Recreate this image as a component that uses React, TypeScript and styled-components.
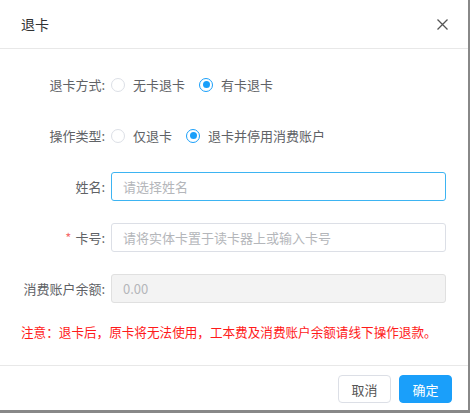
import React from 'react'
import styled, { createGlobalStyle } from 'styled-components'

const GlobalStyle = createGlobalStyle`
  html, body {
    margin: 0;
    padding: 0;
    background: #888888;
    width: 470px;
    height: 413px;
    overflow: hidden;
  }
  * {
    box-sizing: border-box;
  }
`

const Dialog = styled.div`
  width: 468px;
  height: 410px;
  background: #ffffff;
  display: flex;
  flex-direction: column;
  font-family: 'Noto Sans CJK SC', 'Noto Sans', sans-serif;
  font-size: 13px;
  color: #606266;
`

const Header = styled.div`
  height: 49px;
  flex-shrink: 0;
  display: flex;
  align-items: center;
  justify-content: space-between;
  padding: 0 19px 0 21px;
  border-bottom: 1px solid #e8e8e8;
`

const Title = styled.span`
  font-size: 14px;
  color: #303133;
`

const CloseButton = styled.button`
  width: 14px;
  height: 14px;
  padding: 0;
  border: none;
  background: none;
  display: flex;
  align-items: center;
  justify-content: center;
  cursor: pointer;
`

const Body = styled.div`
  flex: 1;
  display: flex;
  flex-direction: column;
  gap: 22px;
  padding: 21px 22px 0 20px;
`

const FormItem = styled.div`
  display: flex;
  align-items: center;
  height: 29px;
  flex-shrink: 0;
`

const Label = styled.label`
  width: 85px;
  flex-shrink: 0;
  text-align: right;
  margin-right: 6px;
  white-space: nowrap;
  color: #606266;
`

const Required = styled.span`
  color: #f56c6c;
  margin-right: 4px;
`

const RadioGroup = styled.div`
  display: flex;
  align-items: center;
`

const RadioItem = styled.label`
  display: flex;
  align-items: center;
  margin-right: 14px;
  cursor: pointer;
  color: #606266;
`

const RadioCircle = styled.span<{ $checked?: boolean }>`
  width: 14px;
  height: 14px;
  border-radius: 50%;
  border: 1px solid ${({ $checked }) => ($checked ? '#1a9ffa' : '#dcdfe6')};
  display: flex;
  align-items: center;
  justify-content: center;
  margin-right: 8px;
  &::after {
    content: '';
    width: 7px;
    height: 7px;
    border-radius: 50%;
    background: #1a9ffa;
    display: ${({ $checked }) => ($checked ? 'block' : 'none')};
  }
`

const Input = styled.input<{ $focused?: boolean }>`
  flex: 1;
  height: 29px;
  border: 1px solid ${({ $focused }) => ($focused ? '#3db4f2' : '#dcdfe6')};
  border-radius: 3px;
  padding: 0 11px;
  font-family: inherit;
  font-size: 13px;
  color: #606266;
  background: #ffffff;
  outline: none;
  &::placeholder {
    color: #b4b6ba;
  }
  &:disabled {
    background: #f3f3f3;
    border-color: #e0e0e0;
    color: #b4b6ba;
  }
`

const Warning = styled.p`
  margin: -3px -20px 0 1px;
  color: #ff1a1a;
  font-size: 12.6px;
  line-height: 20px;
  white-space: nowrap;
  flex-shrink: 0;
`

const Footer = styled.div`
  height: 45px;
  flex-shrink: 0;
  border-top: 1px solid #e8e8e8;
  display: flex;
  align-items: flex-start;
  justify-content: flex-end;
  gap: 8px;
  padding: 9px 16px 0 0;
`

const Button = styled.button<{ $primary?: boolean }>`
  width: 53px;
  height: 28px;
  border-radius: 4px;
  font-family: inherit;
  font-size: 13px;
  cursor: pointer;
  border: 1px solid ${({ $primary }) => ($primary ? '#1a9ffa' : '#dcdfe6')};
  background: ${({ $primary }) => ($primary ? '#1a9ffa' : '#ffffff')};
  color: ${({ $primary }) => ($primary ? '#ffffff' : '#555555')};
`

function Radio({ label, checked }: { label: string; checked?: boolean }) {
  return (
    <RadioItem>
      <RadioCircle $checked={checked} />
      {label}
    </RadioItem>
  )
}

export default function App() {
  return (
    <>
      <GlobalStyle />
      <Dialog>
        <Header>
          <Title>退卡</Title>
          <CloseButton aria-label="close">
            <svg width="11" height="11" viewBox="0 0 11 11">
              <path d="M0.5 0.5 L10.5 10.5 M10.5 0.5 L0.5 10.5" stroke="#555" strokeWidth="1.3" />
            </svg>
          </CloseButton>
        </Header>
        <Body>
          <FormItem>
            <Label>退卡方式:</Label>
            <RadioGroup>
              <Radio label="无卡退卡" />
              <Radio label="有卡退卡" checked />
            </RadioGroup>
          </FormItem>
          <FormItem>
            <Label>操作类型:</Label>
            <RadioGroup>
              <Radio label="仅退卡" />
              <Radio label="退卡并停用消费账户" checked />
            </RadioGroup>
          </FormItem>
          <FormItem>
            <Label>姓名:</Label>
            <Input $focused placeholder="请选择姓名" />
          </FormItem>
          <FormItem>
            <Label>
              <Required>*</Required>卡号:
            </Label>
            <Input placeholder="请将实体卡置于读卡器上或输入卡号" />
          </FormItem>
          <FormItem>
            <Label>消费账户余额:</Label>
            <Input disabled value="0.00" readOnly />
          </FormItem>
          <Warning>注意：退卡后，原卡将无法使用，工本费及消费账户余额请线下操作退款。</Warning>
        </Body>
        <Footer>
          <Button>取消</Button>
          <Button $primary>确定</Button>
        </Footer>
      </Dialog>
    </>
  )
}
